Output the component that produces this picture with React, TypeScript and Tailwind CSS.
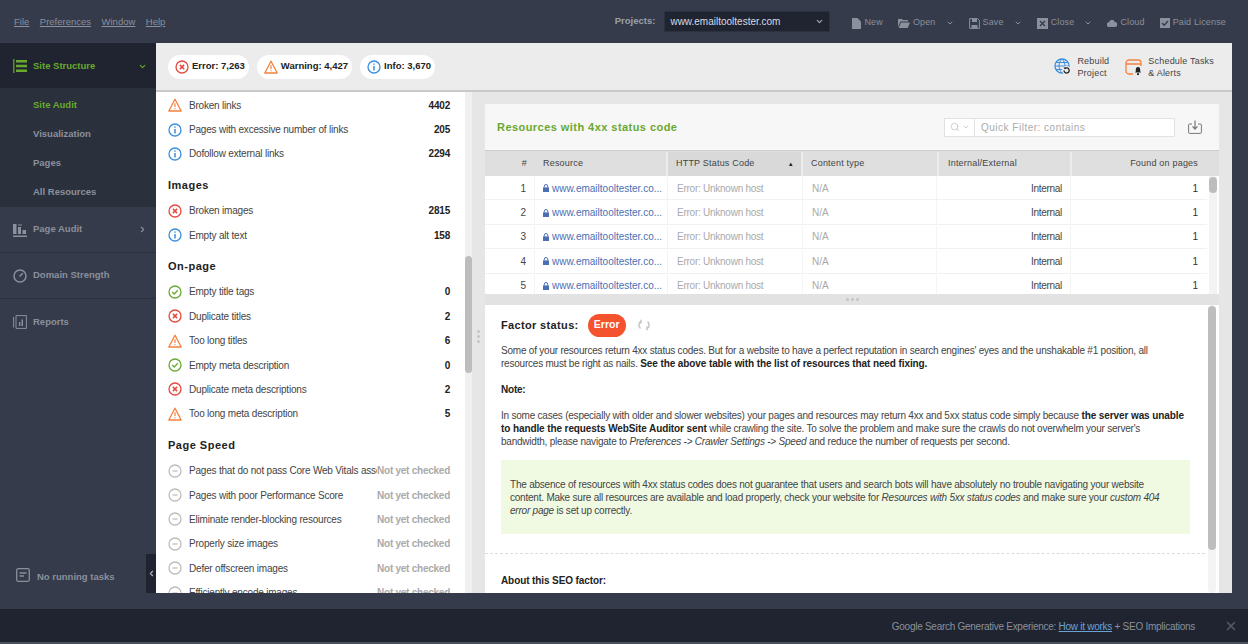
import { ChevronDown, ChevronRight, ChevronLeft, Search, X } from "lucide-react";
import type { ReactNode } from "react";

type Status = "error" | "warning" | "info" | "ok" | "none";

function StatusIcon({ type, size = 14 }: { type: Status; size?: number }) {
  if (type === "warning") {
    return (
      <svg width={size} height={size} viewBox="0 0 14 14" fill="none" className="shrink-0">
        <path d="M7 1.2 13.2 13H.8Z" stroke="#f5803e" strokeWidth="1.3" strokeLinejoin="round" />
        <path d="M7 5.2v3.8M7 10.2v1" stroke="#f5803e" strokeWidth="1.2" />
      </svg>
    );
  }
  const colors = { error: "#e5493f", info: "#3b8fdc", ok: "#6aaa35", none: "#bdbdbd" };
  const c = colors[type];
  return (
    <svg width={size} height={size} viewBox="0 0 14 14" fill="none" className="shrink-0">
      <circle cx="7" cy="7" r="6" stroke={c} strokeWidth="1.3" />
      {type === "error" && <path d="M4.9 4.9l4.2 4.2M9.1 4.9l-4.2 4.2" stroke={c} strokeWidth="1.5" />}
      {type === "info" && <path d="M7 3.4v1.3M7 6v4.6" stroke={c} strokeWidth="1.5" />}
      {type === "ok" && <path d="M4.2 7l2 2 3.6-3.8" stroke={c} strokeWidth="1.3" />}
      {type === "none" && <path d="M4.4 7h5.2" stroke={c} strokeWidth="1.2" />}
    </svg>
  );
}

function Pill({ type, children }: { type: Status; children: ReactNode }) {
  return (
    <div className="flex items-center gap-[3px] h-6 pl-[7px] pr-[4px] bg-white rounded-full text-[9.5px] font-bold text-[#222]">
      <StatusIcon type={type} />
      {children}
    </div>
  );
}

function NavIcon({ name }: { name: string }) {
  const c = name === "structure" ? "#6aa82f" : "#8a909c";
  return (
    <svg width="14" height="14" viewBox="0 0 14 14" fill="none" className="shrink-0">
      {name === "structure" && (
        <>
          <path d="M.8 0v14" stroke={c} strokeWidth="1.2" />
          <path d="M3 1h11v2.4H3zM3 5.8h11v2.4H3zM3 10.6h11V13H3z" fill={c} />
        </>
      )}
      {name === "audit" && (
        <>
          <path d="M0 1h3.5v10H0zM5 4h3v7H5zM9.5 7H13v4H9.5zM0 12.4h14V14H0z" fill={c} />
          <path d="M6 1v2M8 1v2" stroke={c} />
        </>
      )}
      {name === "domain" && (
        <>
          <circle cx="7" cy="7" r="6" stroke={c} strokeWidth="1.5" />
          <path d="M6.5 7.5 9.8 4.2" stroke={c} strokeWidth="1.5" />
        </>
      )}
      {name === "reports" && (
        <>
          <path d="M3 .6h10.4v12.8H3z" stroke={c} />
          <path d="M.6 2v10.5" stroke={c} />
          <path d="M6 7h1.4v4H6zM8.5 4.5H10V11H8.5z" fill={c} />
        </>
      )}
    </svg>
  );
}

function NavGroup({ name, label, arrow, border }: { name: string; label: string; arrow?: boolean; border?: boolean }) {
  return (
    <div className={`flex items-center h-[46px] pl-[13px] pr-[9px] text-[9.5px] font-bold text-[#8a909c] ${border ? "border-b border-[#2b303c]" : ""}`}>
      <NavIcon name={name} />
      <span className="ml-[6px] flex-1">{label}</span>
      {arrow && <ChevronRight size={9} strokeWidth={3} />}
    </div>
  );
}

function Row({ type, label, value }: { type: Status; label: string; value: string }) {
  const none = type === "none";
  return (
    <div className="flex items-center h-[24.4px] pl-[12px] pr-[15px]">
      <StatusIcon type={type} />
      <span className="ml-[7px] flex-1 min-w-0 whitespace-nowrap overflow-hidden text-[10px] tracking-[-0.2px] text-[#444]">{label}</span>
      <span className={`text-[10px] font-bold ${none ? "text-[#aaa] tracking-[-0.25px]" : "text-[#222] tracking-[-0.2px]"}`}>{value}</span>
    </div>
  );
}

function Section({ title }: { title: string }) {
  return <div className="flex items-center h-[32.4px] pt-[6px] pl-[12px] text-[11px] font-bold tracking-[0.5px] text-[#222]">{title}</div>;
}

function ToolItem({ label, icon, arrow }: { label: string; icon: ReactNode; arrow?: boolean }) {
  return (
    <div className="flex items-center text-[#8a909c] text-[9px] tracking-[0.15px]">
      {icon}
      <span className="ml-[3px]">{label}</span>
      {arrow && <ChevronDown size={8} strokeWidth={3} className="ml-[10px]" />}
    </div>
  );
}

const gridCols = "grid grid-cols-[49px_134px_135px_134px_134px_136px]";

export default function App() {
  const rows = [1, 2, 3, 4, 5];
  return (
    <div className="h-screen w-full flex flex-col overflow-hidden bg-[#353b4a] font-['Liberation_Sans',Arial,sans-serif]">
      {/* top bar */}
      <div className="h-[43px] shrink-0 flex items-center">
        <div className="flex gap-[10.5px] pl-[14px] pt-[1px] text-[9.5px] text-[#8a909c]">
          <span className="underline decoration-[#8a909c]">File</span>
          <span className="underline">Preferences</span>
          <span className="underline">Window</span>
          <span className="underline">Help</span>
        </div>
        <div className="ml-auto flex items-center pr-[22px]">
          <span className="text-[9.5px] font-bold text-[#9aa0ab]">Projects:</span>
          <div className="ml-[9px] w-[166px] h-[21px] flex items-center justify-between pl-[5px] pr-[5px] bg-[#1f2430] border border-[#2b3140] text-[10px] text-[#d8dbe0]">
            www.emailtooltester.com
            <ChevronDown size={9} strokeWidth={3} className="text-[#aab]" />
          </div>
          <div className="ml-[22px] flex items-center gap-[15px] pt-[3px]">
            <ToolItem label="New" icon={<svg width="9" height="11" viewBox="0 0 9 11"><path d="M0 0h5.5L9 3.5V11H0z" fill="#8a909c" /></svg>} />
            <ToolItem label="Open" arrow icon={<svg width="12" height="10" viewBox="0 0 12 10"><path d="M0 1h4l1 1h5v1.5H2.5L0 9zM3 4.5h9L9.8 10H.6z" fill="#8a909c" /></svg>} />
            <ToolItem label="Save" arrow icon={<svg width="11" height="11" viewBox="0 0 11 11" fill="none"><path d="M.6.6h8L10.4 2.4v8H.6z" stroke="#8a909c" /><path d="M3 .6h5V4H3zM2.5 7h6v3.4h-6z" fill="#8a909c" /></svg>} />
            <ToolItem label="Close" arrow icon={<svg width="11" height="11" viewBox="0 0 11 11"><path d="M0 0h11v11H0z" fill="#8a909c" /><path d="M3 3l5 5M8 3l-5 5" stroke="#353b4a" strokeWidth="1.4" /></svg>} />
            <ToolItem label="Cloud" icon={<svg width="10" height="8" viewBox="0 0 10 8"><path d="M2.4 8A2.4 2.4 0 0 1 2 3.2 3 3 0 0 1 7.8 3 2.5 2.5 0 0 1 7.8 8z" fill="#8a909c" /></svg>} />
            <ToolItem label="Paid License" icon={<svg width="10" height="10" viewBox="0 0 10 10"><path d="M0 0h10v10H0z" fill="#8a909c" /><path d="M2 5l2.2 2.2L8 3" stroke="#353b4a" strokeWidth="1.4" fill="none" /></svg>} />
          </div>
        </div>
      </div>

      {/* middle */}
      <div className="h-[550px] shrink-0 flex">
        <aside className="w-[156px] shrink-0 flex flex-col relative">
          <div className="h-[45px] flex items-center pl-[13px] pr-[9px] pt-[1px] bg-[#1f2430] text-[9.5px] font-bold text-[#6aa82f]">
            <NavIcon name="structure" />
            <span className="ml-[6px] flex-1">Site Structure</span>
            <ChevronDown size={9} strokeWidth={3} />
          </div>
          <div className="h-[119px] bg-[#2a303c] flex flex-col pl-[33px] pt-[2px] text-[9.5px] font-bold text-[#8a909c]">
            <div className="h-[29.4px] flex items-center text-[#6aa82f]">Site Audit</div>
            <div className="h-[29.4px] flex items-center">Visualization</div>
            <div className="h-[29.4px] flex items-center">Pages</div>
            <div className="h-[29.4px] flex items-center">All Resources</div>
          </div>
          <NavGroup name="audit" label="Page Audit" arrow border />
          <NavGroup name="domain" label="Domain Strength" border />
          <NavGroup name="reports" label="Reports" />
          <div className="mt-auto h-[39px] flex items-start pl-[16px] pt-[14px] text-[9.5px] font-bold text-[#8a909c]">
            <svg width="14" height="14" viewBox="0 0 14 14" fill="none" className="shrink-0">
              <rect x=".7" y=".7" width="12.6" height="12.6" rx="1.5" stroke="#8a909c" strokeWidth="1.3" />
              <path d="M3.5 5h7M3.5 8h4.5" stroke="#8a909c" strokeWidth="1.3" />
            </svg>
            <span className="ml-[7px] mt-[2px]">No running tasks</span>
          </div>
          <div className="absolute right-0 bottom-0 w-[10px] h-[39px] bg-[#1f2430] flex items-center justify-center text-[#b0b4bc]">
            <ChevronLeft size={9} strokeWidth={3} />
          </div>
        </aside>

        <main className="w-[1076px] shrink-0 flex flex-col bg-[#e6e6e6]">
          <div className="h-[49px] shrink-0 flex items-center bg-[#ececec] border-b-2 border-[#c9c9c9] pl-[12px] pr-[18px]">
            <div className="flex gap-[8px]">
              <Pill type="error">Error: 7,263</Pill>
              <Pill type="warning">Warning: 4,427</Pill>
              <Pill type="info">Info: 3,670</Pill>
            </div>
            <div className="ml-auto flex items-center gap-[16px] text-[9px] leading-[12px] tracking-[0.2px] text-[#444]">
              <div className="flex items-center gap-[5px]">
                <svg width="18" height="18" viewBox="0 0 18 18" fill="none">
                  <circle cx="8" cy="8" r="7" stroke="#3b8fdc" strokeWidth="1.3" />
                  <path d="M1 8h14M8 1c-4 4-4 10 0 14M8 1c4 4 4 10 0 14M2 4.5h12M2 11.5h12" stroke="#3b8fdc" />
                  <circle cx="12.5" cy="12.5" r="4.5" fill="#ececec" />
                  <path d="M10 12.5a2.6 2.6 0 1 0 .9-2" stroke="#222" strokeWidth="1.3" />
                  <path d="M9.5 9.5l1.4 1.9 1-1.8z" fill="#222" />
                </svg>
                <div>Rebuild<br />Project</div>
              </div>
              <div className="flex items-center gap-[5px]">
                <svg width="18" height="18" viewBox="0 0 18 18" fill="none">
                  <path d="M8 16H4a3 3 0 0 1-3-3V5a3 3 0 0 1 3-3h9a3 3 0 0 1 3 3v3M1 6h15" stroke="#f5803e" strokeWidth="1.3" />
                  <path d="M13 9a2.2 2.2 0 0 0-2.2 2.2v2L10 14.5h6l-.8-1.3v-2A2.2 2.2 0 0 0 13 9zM12 15.2h2V17h-2z" fill="#222" />
                </svg>
                <div>Schedule Tasks<br />&amp; Alerts</div>
              </div>
            </div>
          </div>

          <div className="flex-1 min-h-0 flex">
            {/* issue list */}
            <div className="w-[309px] shrink-0 bg-white overflow-hidden pt-[1px]">
              <Row type="warning" label="Broken links" value="4402" />
              <Row type="info" label="Pages with excessive number of links" value="205" />
              <Row type="info" label="Dofollow external links" value="2294" />
              <Section title="Images" />
              <Row type="error" label="Broken images" value="2815" />
              <Row type="info" label="Empty alt text" value="158" />
              <Section title="On-page" />
              <Row type="ok" label="Empty title tags" value="0" />
              <Row type="error" label="Duplicate titles" value="2" />
              <Row type="warning" label="Too long titles" value="6" />
              <Row type="ok" label="Empty meta description" value="0" />
              <Row type="error" label="Duplicate meta descriptions" value="2" />
              <Row type="warning" label="Too long meta description" value="5" />
              <Section title="Page Speed" />
              <Row type="none" label="Pages that do not pass Core Web Vitals assessment" value="Not yet checked" />
              <Row type="none" label="Pages with poor Performance Score" value="Not yet checked" />
              <Row type="none" label="Eliminate render-blocking resources" value="Not yet checked" />
              <Row type="none" label="Properly size images" value="Not yet checked" />
              <Row type="none" label="Defer offscreen images" value="Not yet checked" />
              <Row type="none" label="Efficiently encode images" value="Not yet checked" />
            </div>
            {/* list scrollbar */}
            <div className="w-[7px] shrink-0 bg-[#f0f0f0] pt-[164px]">
              <div className="h-[117px] rounded-full bg-[#bdbdbd]" />
            </div>
            <div className="w-[13px] shrink-0 flex flex-col items-center justify-center gap-[2px] pb-[12px]">
              <span className="w-[3px] h-[3px] rounded-full bg-[#c4c4c4]" />
              <span className="w-[3px] h-[3px] rounded-full bg-[#c4c4c4]" />
              <span className="w-[3px] h-[3px] rounded-full bg-[#c4c4c4]" />
            </div>

            {/* right side */}
            <div className="w-[734px] shrink-0 flex flex-col pt-[12px]">
              <div className="h-[190px] shrink-0 flex flex-col bg-white overflow-hidden">
                <div className="h-[47px] shrink-0 flex items-center bg-[#f7f7f7] border-b border-[#d0d0d0] pl-[12px] pr-[17px]">
                  <span className="text-[11px] font-bold tracking-[0.45px] text-[#6aa82f]">Resources with 4xx status code</span>
                  <div className="ml-auto flex items-center h-[19px] w-[231px] bg-white border border-[#e2e2e2]">
                    <div className="w-[30px] h-full flex items-center justify-center gap-[2px] border-r border-[#e2e2e2] text-[#c4c4c4]">
                      <Search size={10} />
                      <ChevronDown size={8} strokeWidth={2.5} />
                    </div>
                    <span className="pl-[6px] text-[10px] tracking-[0.5px] text-[#aaa]">Quick Filter: contains</span>
                  </div>
                  <svg width="14" height="14" viewBox="0 0 14 14" fill="none" className="ml-[13px]">
                    <path d="M4 4H1.5A1 1 0 0 0 .6 5v7.4a1 1 0 0 0 1 1h10.8a1 1 0 0 0 1-1V5a1 1 0 0 0-1-1H10" stroke="#777" />
                    <path d="M7 .5v8M4.5 6.3 7 9l2.5-2.7" stroke="#777" strokeWidth="1.2" />
                  </svg>
                </div>
                <div className="flex-1 min-h-0 flex">
                  <div className="w-[722px] shrink-0">
                    <div className={`${gridCols} h-[25px] pt-[1px] bg-[#dfdfdf] text-[9px] tracking-[0.2px] text-[#444]`}>
                      <div className="flex items-center justify-end pr-[7px]">#</div>
                      <div className="flex items-center pl-[9px] border-r-2 border-[#ececec]">Resource</div>
                      <div className="flex items-center justify-between pl-[8px] pr-[7px] bg-[#d9d9d9] border-r-2 border-[#ececec]">
                        HTTP Status Code
                        <span className="text-[6px] text-[#222]">▲</span>
                      </div>
                      <div className="flex items-center pl-[8px]">Content type</div>
                      <div className="flex items-center pl-[9px] border-l-2 border-[#ececec] border-r">Internal/External</div>
                      <div className="flex items-center justify-end pr-[9px] border-l border-[#ececec]">Found on pages</div>
                    </div>
                    {rows.map((n) => (
                      <div key={n} className={`${gridCols} h-[24.4px] pt-[1px] border-b border-[#f1f1f1] text-[10px]`}>
                        <div className="flex items-center justify-end pr-[8px] text-[#444]">{n}</div>
                        <div className="flex items-center pl-[8px] border-l border-r border-[#f4f4f4] text-[#4a6fb5] whitespace-nowrap overflow-hidden">
                          <svg width="6" height="8" viewBox="0 0 6 8" fill="none" className="shrink-0 mr-[3px]">
                            <path d="M1.3 3.5V2.2a1.7 1.7 0 0 1 3.4 0v1.3" stroke="#4a6fb5" />
                            <path d="M0 3.4h6V8H0z" fill="#4a6fb5" />
                          </svg>
                          www.emailtooltester.co...
                        </div>
                        <div className="flex items-center pl-[9px] border-r border-[#f4f4f4] tracking-[-0.25px] text-[#aaa]">Error: Unknown host</div>
                        <div className="flex items-center pl-[9px] border-r border-[#f4f4f4] text-[#aaa]">N/A</div>
                        <div className="flex items-center justify-end pr-[8px] border-r border-[#f4f4f4] tracking-[-0.3px] text-[#444]">Internal</div>
                        <div className="flex items-center justify-end pr-[9px] text-[#333]">1</div>
                      </div>
                    ))}
                  </div>
                  <div className="flex-1 flex flex-col">
                    <div className="h-[25px] shrink-0 bg-[#dfdfdf]" />
                    <div className="flex-1 mx-[2px] pt-[1px] bg-[#f3f3f3]">
                      <div className="h-[16px] rounded-full bg-[#bdbdbd]" />
                    </div>
                  </div>
                </div>
              </div>

              <div className="h-[11px] shrink-0 flex items-center justify-center gap-[2px] bg-[#e2e2e2]">
                <span className="w-[3px] h-[3px] rounded-full bg-[#c4c4c4]" />
                <span className="w-[3px] h-[3px] rounded-full bg-[#c4c4c4]" />
                <span className="w-[3px] h-[3px] rounded-full bg-[#c4c4c4]" />
              </div>

              <div className="flex-1 min-h-0 flex bg-white overflow-hidden">
                <div className="w-[720px] shrink-0">
                  <div className="flex items-center h-[20px] mt-[10px] pl-[16px]">
                    <span className="text-[11px] font-bold tracking-[0.35px] text-[#222]">Factor status:</span>
                    <span className="ml-[9px] w-[38px] h-[23px] flex items-center justify-center rounded-full bg-[#f5532d] text-white text-[10.5px] font-bold">Error</span>
                    <svg width="12" height="12" viewBox="0 0 12 12" fill="none" className="ml-[12px]">
                      <path d="M2.5 9.5a4.6 4.6 0 0 1 1-7.5M9.5 2.5a4.6 4.6 0 0 1-1 7.5M3 .8v3H.6M9 11.2v-3h2.4" stroke="#c8c8c8" strokeWidth="1.6" />
                    </svg>
                  </div>
                  <div className="pl-[16px] pt-[9px] w-[705px] text-[10px] tracking-[-0.22px] leading-[13px] text-[#444]">
                    <p>
                      Some of your resources return 4xx status codes. But for a website to have a perfect reputation in search engines' eyes and the unshakable #1 position, all resources must be right as nails.{" "}
                      <b className="text-[#222] tracking-[-0.1px]">See the above table with the list of resources that need fixing.</b>
                    </p>
                    <p className="mt-[13px] font-bold text-[#222]">Note:</p>
                    <p className="mt-[13px]">
                      In some cases (especially with older and slower websites) your pages and resources may return 4xx and 5xx status code simply because{" "}
                      <b className="text-[#222] tracking-[-0.1px]">the server was unable to handle the requests WebSite Auditor sent</b> while crawling the site. To solve the problem and make sure the crawls do not overwhelm your server's
                      <br />
                      bandwidth, please navigate to{" "}
                      <i>Preferences -&gt; Crawler Settings -&gt; Speed</i> and reduce the number of requests per second.
                    </p>
                    <div className="mt-[12px] w-[689px] h-[74px] flex items-center pl-[9px] pr-[20px] bg-[#f0fae2]">
                      <p>
                        The absence of resources with 4xx status codes does not guarantee that users and search bots will have absolutely no trouble navigating your website content. Make sure all resources are available and load properly, check your website for{" "}
                        <i>Resources with 5xx status codes</i> and make sure your <i>custom 404 error page</i> is set up correctly.
                      </p>
                    </div>
                  </div>
                  <div className="mt-[19px] border-t border-dashed border-[#dcdcdc]" />
                  <div className="pl-[16px] pt-[19px] text-[10px] tracking-[-0.1px] font-bold text-[#222]">About this SEO factor:</div>
                </div>
                <div className="flex-1 flex justify-center">
                  <div className="w-[8px] h-full bg-[#f4f4f4] rounded-full">
                    <div className="h-[244px] mt-[1px] rounded-full bg-[#bdbdbd]" />
                  </div>
                </div>
              </div>
            </div>
          </div>
        </main>
      </div>

      <div className="h-[16px] shrink-0" />

      {/* news footer */}
      <div className="h-[33px] shrink-0 flex items-center justify-end pt-[1px] bg-[#1f2430] text-[10px] tracking-[-0.27px] text-[#8a909c]">
        <span>Google Search Generative Experience: <span className="text-[#6ba3d6] underline">How it works</span> + SEO Implications</span>
        <X size={14} strokeWidth={2.5} className="ml-[29px] mr-[10px] text-[#555b68]" />
      </div>
      <div className="flex-1 bg-[#4a505c]" />
    </div>
  );
}
